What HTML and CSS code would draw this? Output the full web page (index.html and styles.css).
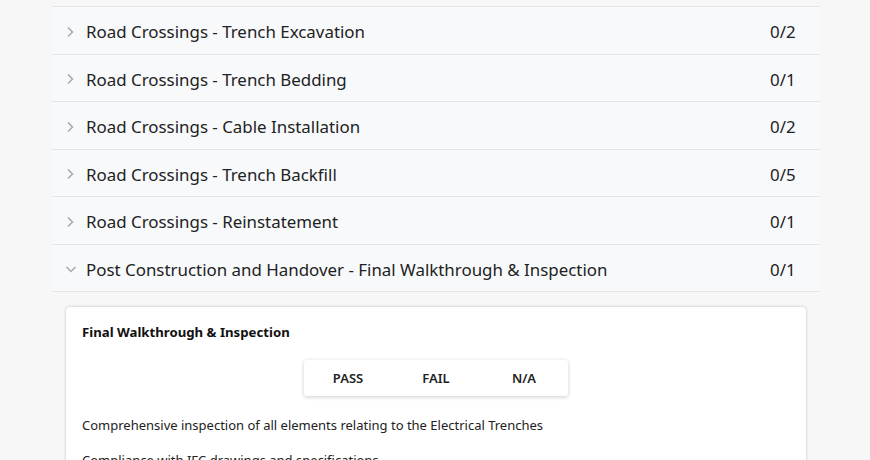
FILE: index.html
```html
<!DOCTYPE html>
<html>
<head>
<meta charset="utf-8">
<link rel="stylesheet" href="styles.css">
</head>
<body>
<div class="page">
  <div class="list">
    <div class="row"><span class="chev"><svg width="10" height="12" viewBox="0 0 10 12"><path d="M3 1.5 L7.5 6 L3 10.5" fill="none" stroke="#a8a8a8" stroke-width="1.5"/></svg></span><span class="label">Road Crossings - Trench Excavation</span><span class="count">0/2</span></div>
    <div class="row"><span class="chev"><svg width="10" height="12" viewBox="0 0 10 12"><path d="M3 1.5 L7.5 6 L3 10.5" fill="none" stroke="#a8a8a8" stroke-width="1.5"/></svg></span><span class="label">Road Crossings - Trench Bedding</span><span class="count">0/1</span></div>
    <div class="row"><span class="chev"><svg width="10" height="12" viewBox="0 0 10 12"><path d="M3 1.5 L7.5 6 L3 10.5" fill="none" stroke="#a8a8a8" stroke-width="1.5"/></svg></span><span class="label">Road Crossings - Cable Installation</span><span class="count">0/2</span></div>
    <div class="row"><span class="chev"><svg width="10" height="12" viewBox="0 0 10 12"><path d="M3 1.5 L7.5 6 L3 10.5" fill="none" stroke="#a8a8a8" stroke-width="1.5"/></svg></span><span class="label">Road Crossings - Trench Backfill</span><span class="count">0/5</span></div>
    <div class="row"><span class="chev"><svg width="10" height="12" viewBox="0 0 10 12"><path d="M3 1.5 L7.5 6 L3 10.5" fill="none" stroke="#a8a8a8" stroke-width="1.5"/></svg></span><span class="label">Road Crossings - Reinstatement</span><span class="count">0/1</span></div>
    <div class="row"><span class="chev"><svg width="12" height="10" viewBox="0 0 12 10"><path d="M1.5 3 L6 7.5 L10.5 3" fill="none" stroke="#a8a8a8" stroke-width="1.5"/></svg></span><span class="label">Post Construction and Handover - Final Walkthrough &amp; Inspection</span><span class="count">0/1</span></div>
  </div>
  <div class="card">
    <div class="card-title">Final Walkthrough &amp; Inspection</div>
    <div class="seg">
      <div class="seg-btn">PASS</div>
      <div class="seg-btn">FAIL</div>
      <div class="seg-btn">N/A</div>
    </div>
    <p class="desc">Comprehensive inspection of all elements relating to the Electrical Trenches</p>
    <p class="desc">Compliance with IFC drawings and specifications</p>
  </div>
</div>
</body>
</html>
```
FILE: styles.css
```css
html, body {
  margin: 0;
  padding: 0;
  background: #f7f7f7;
  font-family: "Noto Sans", "Open Sans", sans-serif;
  color: #1b1b1b;
  overflow: hidden;
}
.page {
  width: 768px;
  margin-left: 52px;
}
.list {
  margin-top: 6px;
  border-top: 1px solid #e4e5e7;
}
.row {
  display: flex;
  align-items: center;
  box-sizing: border-box;
  height: 47.5px;
  padding-top: 3px;
  border-bottom: 1px solid #e4e5e7;
  background: #f8f9fb;
}
.chev {
  width: 34px;
  display: flex;
  justify-content: flex-start;
  padding-left: 13px;
  box-sizing: border-box;
  align-items: center;
}
.label {
  flex: 1;
  font-size: 16.9px;
  color: #222;
}
.count {
  width: 50px;
  font-size: 16.9px;
  color: #222;
}
.card {
  margin: 15px 14px 0 14px;
  background: #fff;
  border-radius: 4px;
  box-shadow: 0 0 3px rgba(0,0,0,0.25);
  padding: 16px 16px 0 16px;
  height: 200px;
}
.card-title {
  font-size: 13.2px;
  font-weight: 700;
  color: #111;
}
.seg {
  display: flex;
  width: 264px;
  margin: 19px auto 0 auto;
  box-shadow: 0 1px 4px rgba(0,0,0,0.2);
  border-radius: 3px;
  background: #fff;
}
.seg-btn {
  flex: 1;
  height: 36px;
  display: flex;
  align-items: center;
  justify-content: center;
  font-size: 13px;
  font-weight: 600;
  color: #222;
}
.desc {
  font-size: 13px;
  margin: 20px 0 0 0;
  color: #222;
}
.desc + .desc {
  margin-top: 17px;
}
```
